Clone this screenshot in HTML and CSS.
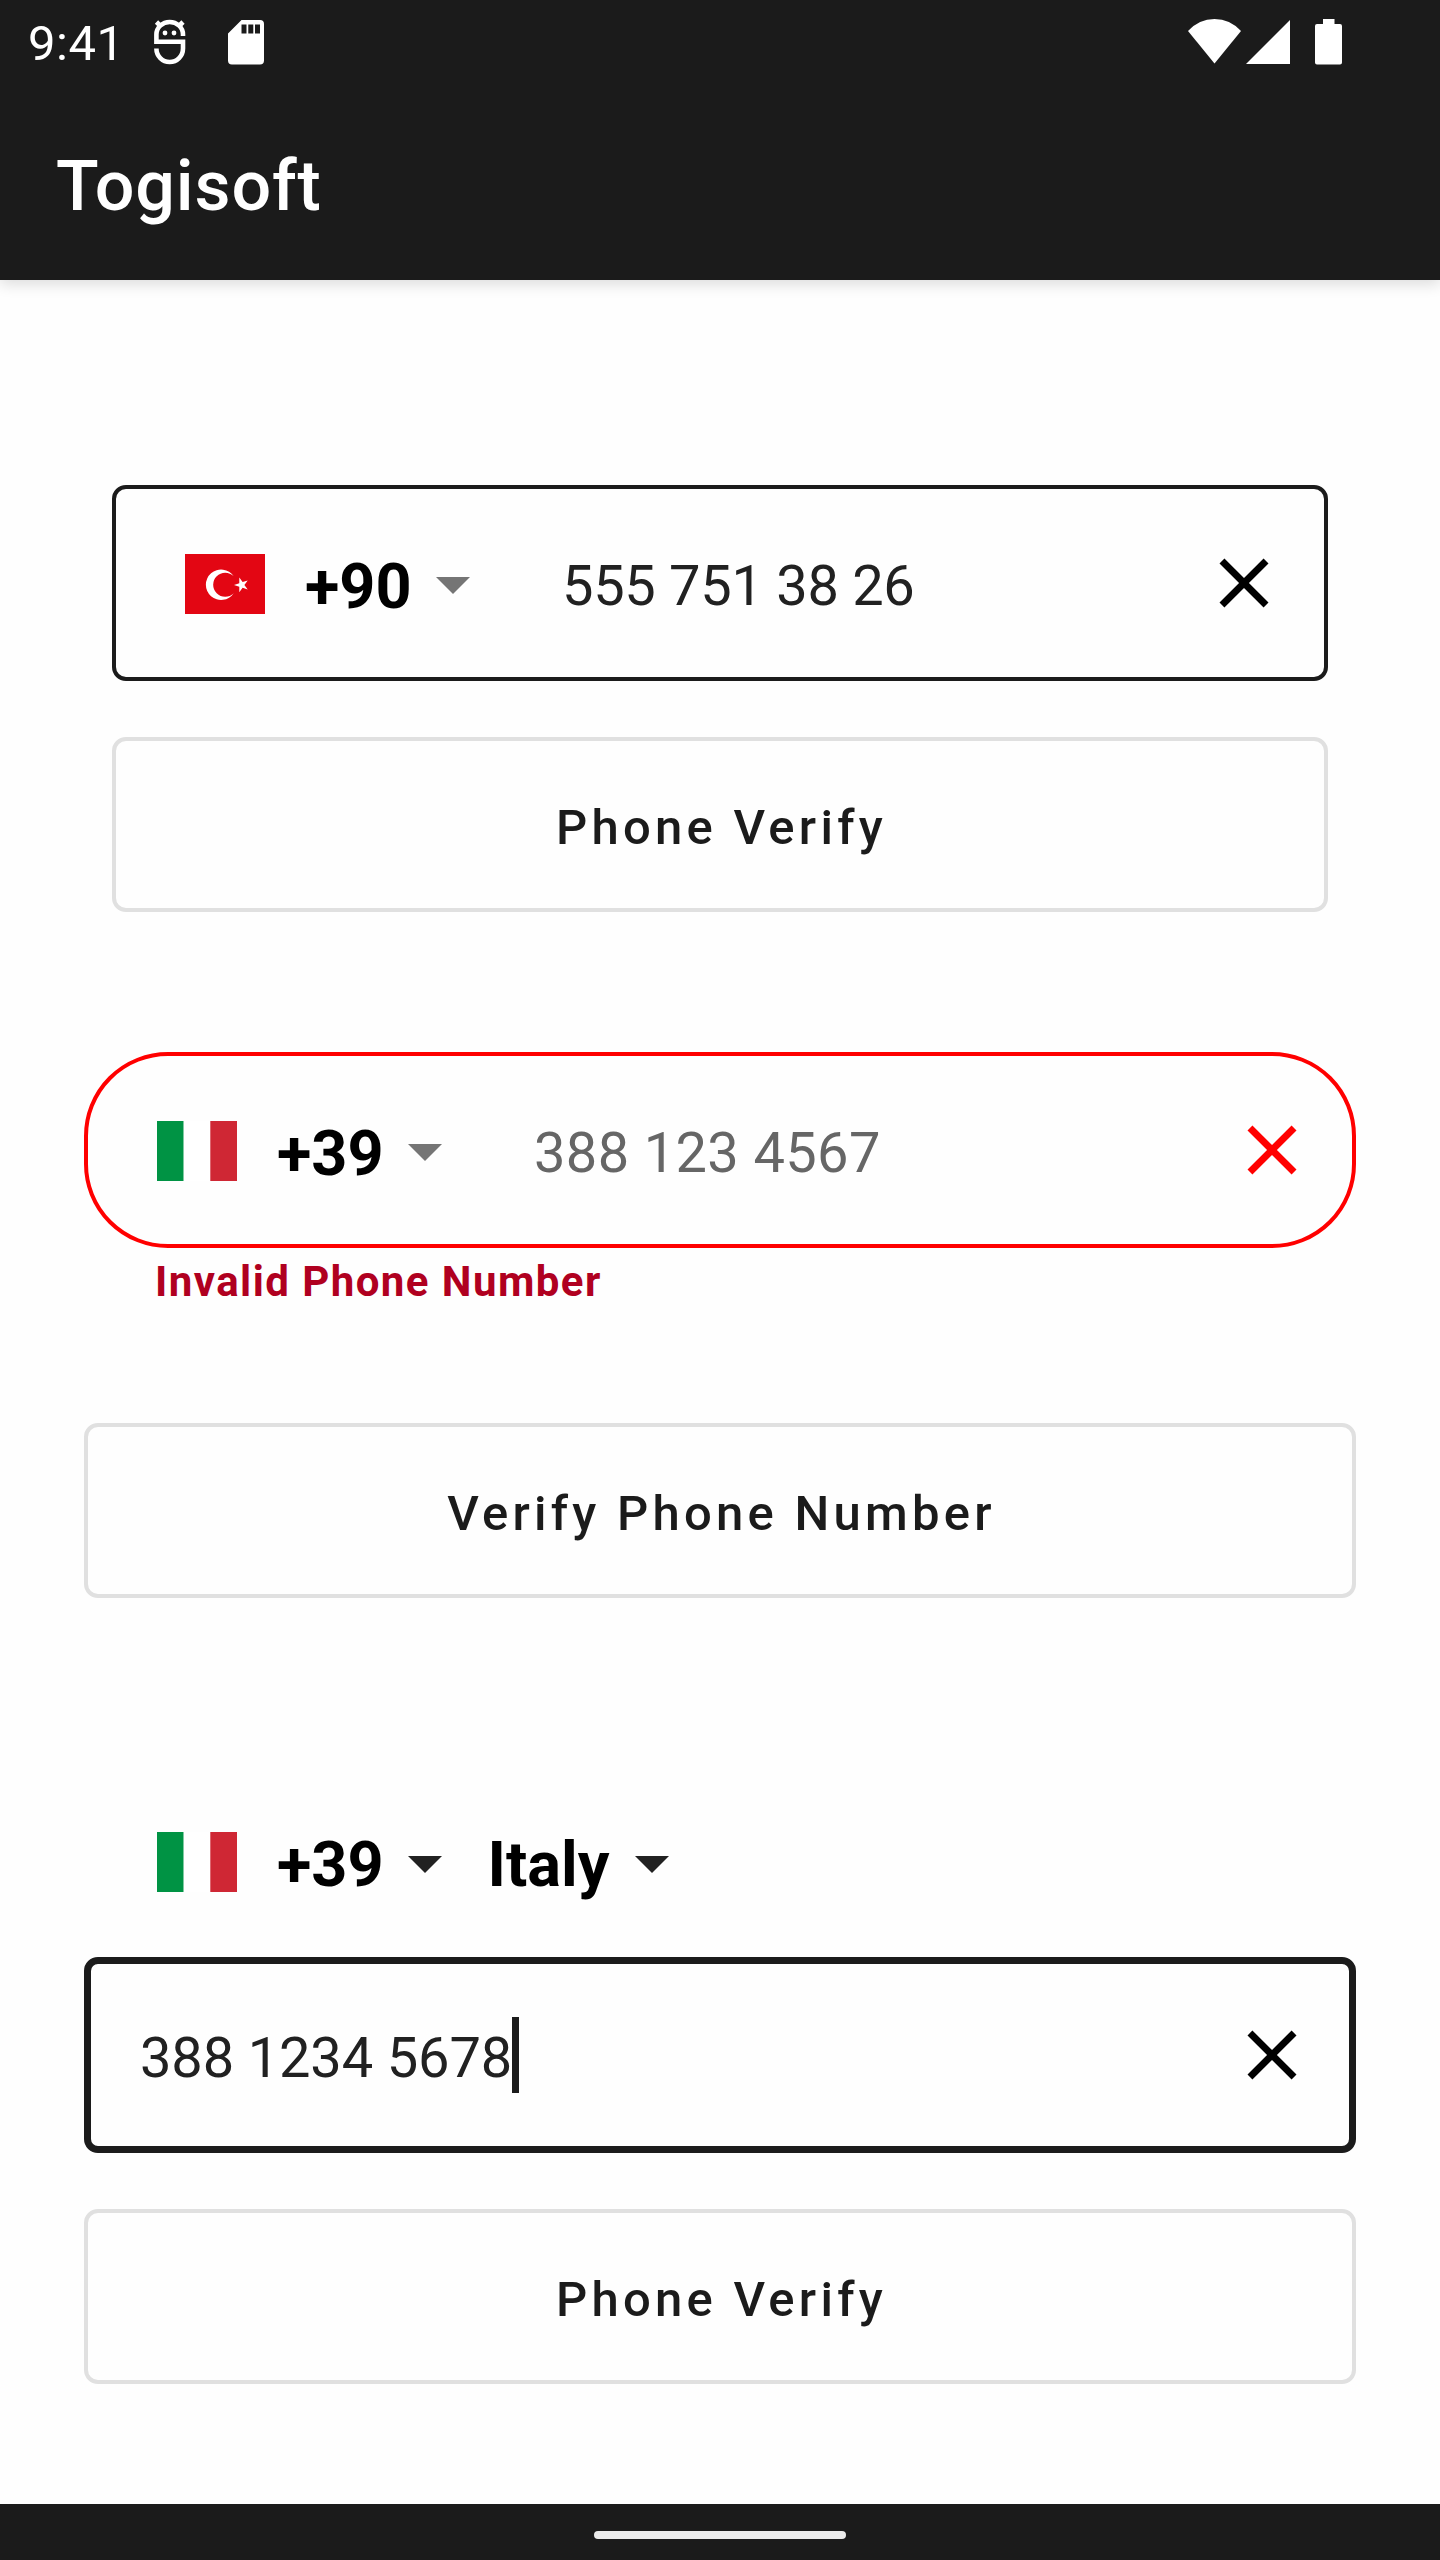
FILE: index.html
```html
<!DOCTYPE html>
<html lang="en">
<head>
<meta charset="utf-8">
<title>Togisoft</title>
<link rel="stylesheet" href="styles.css">
</head>
<body>
<svg class="defs" width="0" height="0" aria-hidden="true">
  <symbol id="close" viewBox="0 0 24 24"><path d="M19 6.41L17.59 5 12 10.59 6.41 5 5 6.41 10.59 12 5 17.59 6.41 19 12 13.41 17.59 19 19 17.59 13.41 12z"/></symbol>
  <symbol id="caret" viewBox="0 0 10 5"><path d="M0 0l5 5 5-5z"/></symbol>
  <symbol id="italy" viewBox="0 0 80 60"><path fill="#009344" d="M0 0h26.7v60H0z"/><path fill="#fff" d="M26.7 0h26.6v60H26.7z"/><path fill="#cf2734" d="M53.3 0H80v60H53.3z"/></symbol>
</svg>
<header class="header">
  <div class="status">
    <span class="clock">9:41</span>
    <svg class="debug" viewBox="0 0 32 46" fill="none" stroke="#fff" stroke-width="4.600">
      <path d="M29 17V15.500A13.300 12.500 0 0 0 2.400 15.500V22.800H29V29.500A13.300 13.500 0 0 1 2.400 29.500"/>
      <path d="M2.500 3l4.500 4.500M29 3l-4.500 4.500"/>
      <circle cx="11" cy="14" r="2.400" fill="#fff" stroke="none"/><circle cx="20" cy="14" r="2.400" fill="#fff" stroke="none"/>
    </svg>
    <svg class="sdcard" viewBox="0 0 36 45" fill="#fff"><path fill-rule="evenodd" d="M13.500 0H32a4 4 0 0 1 4 4V40.500a4 4 0 0 1-4 4H4a4 4 0 0 1-4-4V13.500zM13.500 4.500v9h5v-9zM20.300 4.500v9h5v-9zM27 4.500v9h5v-9z"/></svg>
    <svg class="wifi" viewBox="0 0 53 45" fill="#fff"><path d="M0 12Q11 0 26.500 0T53 12L26.500 44.500z"/></svg>
    <svg class="signal" viewBox="0 0 44 44" fill="#fff"><path d="M44 0V44H0z"/></svg>
    <svg class="battery" viewBox="0 0 27 46" fill="#fff"><path d="M8 0H19.500V5H25a2 2 0 0 1 2 2V43.500a2 2 0 0 1-2 2H2a2 2 0 0 1-2-2V7a2 2 0 0 1 2-2H8z"/></svg>
  </div>
  <h1 class="title">Togisoft</h1>
</header>
<main class="main">
  <section class="form form-turkey">
    <div class="field">
      <svg class="flag" viewBox="0 0 80 60"><path fill="#e30613" d="M0 0h80v60H0z"/><path fill="#fff" d="M48.700 22.300A15.200 15.200 0 1 0 48.700 39.200 12 12 0 1 1 48.700 22.300zM49 31l5.300-1.700V23.500l3.300 4.600 5.100-1.700-3.300 4.500 3.300 4.500-5.100-1.700-3.300 4.500v-5.500z"/></svg>
      <span class="code">+90</span>
      <svg class="caret"><use href="#caret"/></svg>
      <span class="number">555 751 38 26</span>
      <svg class="close"><use href="#close"/></svg>
    </div>
    <button class="button">Phone Verify</button>
  </section>
  <section class="form form-invalid">
    <div class="field field-invalid">
      <svg class="flag"><use href="#italy"/></svg>
      <span class="code">+39</span>
      <svg class="caret"><use href="#caret"/></svg>
      <span class="number number-hint">388 123 4567</span>
      <svg class="close"><use href="#close"/></svg>
    </div>
    <p class="error">Invalid Phone Number</p>
    <button class="button">Verify Phone Number</button>
  </section>
  <section class="form form-country">
    <div class="picker">
      <svg class="flag"><use href="#italy"/></svg>
      <span class="code">+39</span>
      <svg class="caret caret-dark"><use href="#caret"/></svg>
      <span class="country">Italy</span>
      <svg class="caret caret-dark"><use href="#caret"/></svg>
    </div>
    <div class="field field-focused">
      <span class="number">388 1234 5678</span>
      <i class="cursor"></i>
      <svg class="close"><use href="#close"/></svg>
    </div>
    <button class="button">Phone Verify</button>
  </section>
</main>
<footer class="navbar"><div class="handle"></div></footer>
</body>
</html>
```
FILE: styles.css
```css
* { box-sizing: border-box; }
body {
  margin: 0;
  height: 2560px;
  display: flex;
  flex-direction: column;
  background: #fefefe;
  font-family: Roboto, sans-serif;
  color: #1b1b1b;
}
svg { display: block; flex: none; }
.defs { position: absolute; }
.header {
  height: 280px;
  flex: none;
  background: #1b1b1b;
  color: #fff;
  box-shadow: 0 4px 14px rgba(0, 0, 0, .14);
}
.status {
  height: 84px;
  padding: 19px 98px 0 28px;
  display: flex;
  align-items: flex-start;
}
.clock {
  width: 126px;
  font-size: 49px;
  line-height: 50px;
  letter-spacing: .5px;
}
.debug { width: 32px; height: 46px; }
.sdcard { width: 36px; height: 45px; margin: 1px 0 0 42px; }
.wifi { width: 53px; height: 45px; margin-left: auto; }
.signal { width: 44px; height: 44px; margin: 1px 25px 0 5px; }
.battery { width: 27px; height: 46px; }
.title {
  margin: 0;
  padding: 61px 56px 0;
  font-size: 70px;
  line-height: 82px;
  font-weight: 500;
  letter-spacing: .85px;
}
.main { flex: 1; }
.form { display: flex; flex-direction: column; margin: 0 84px; }
.form-turkey { margin: 205px 112px 0; }
.form-invalid { margin-top: 140px; }
.form-country { margin-top: 210px; }
.field {
  height: 196px;
  padding: 0 38px 0 69px;
  border: 4px solid #1b1b1b;
  border-radius: 14px;
  display: flex;
  align-items: center;
}
.field-invalid { border-color: #f00; border-radius: 84px; }
.field-invalid .close { fill: #f00; }
.field-focused { border-width: 7px; padding: 0 35px 0 49px; margin-top: 41px; }
.flag { width: 80px; height: 60px; margin-right: 40px; }
.field .flag { margin-top: 2px; }
.picker {
  height: 108px;
  padding-left: 73px;
  display: flex;
  align-items: center;
}
.code, .country {
  font-size: 63px;
  line-height: 74px;
  font-weight: 700;
  color: #000;
  padding-top: 5px;
}
.field .code { padding-top: 7px; }
.code { width: 130px; }
.country { width: 146px; margin-left: 1.5px; }
.caret { width: 34px; height: 17px; margin: 5px 44px 0 1px; fill: #757575; }
.caret-dark { fill: #212121; }
.number {
  margin-left: 48px;
  padding-top: 5px;
  font-size: 56px;
  line-height: 66px;
  color: #212121;
  letter-spacing: -.3px;
}
.number-hint { color: #666; letter-spacing: .35px; }
.field-focused .number { margin-left: 0; letter-spacing: -.15px; }
.cursor { width: 7px; height: 76px; background: #1b1b1b; }
.close { width: 84px; height: 84px; margin-left: auto; fill: #000; }
.error {
  margin: 9px 0 0 71px;
  font-size: 42px;
  line-height: 49px;
  font-weight: 700;
  letter-spacing: 1.45px;
  color: #b00020;
}
.button {
  height: 175px;
  margin: 56px 0 0;
  padding: 7px 0 0 3px;
  border: 4px solid #e0e0e0;
  border-radius: 14px;
  background: transparent;
  color: #1b1b1b;
  font: 500 49px/58px Roboto, sans-serif;
  letter-spacing: 4.25px;
}
.error + .button { margin-top: 117px; }
.navbar {
  height: 56px;
  padding-top: 27px;
  background: #1b1b1b;
}
.handle {
  width: 252px;
  height: 8px;
  margin: 0 auto;
  border-radius: 4px;
  background: #ececec;
}
```
